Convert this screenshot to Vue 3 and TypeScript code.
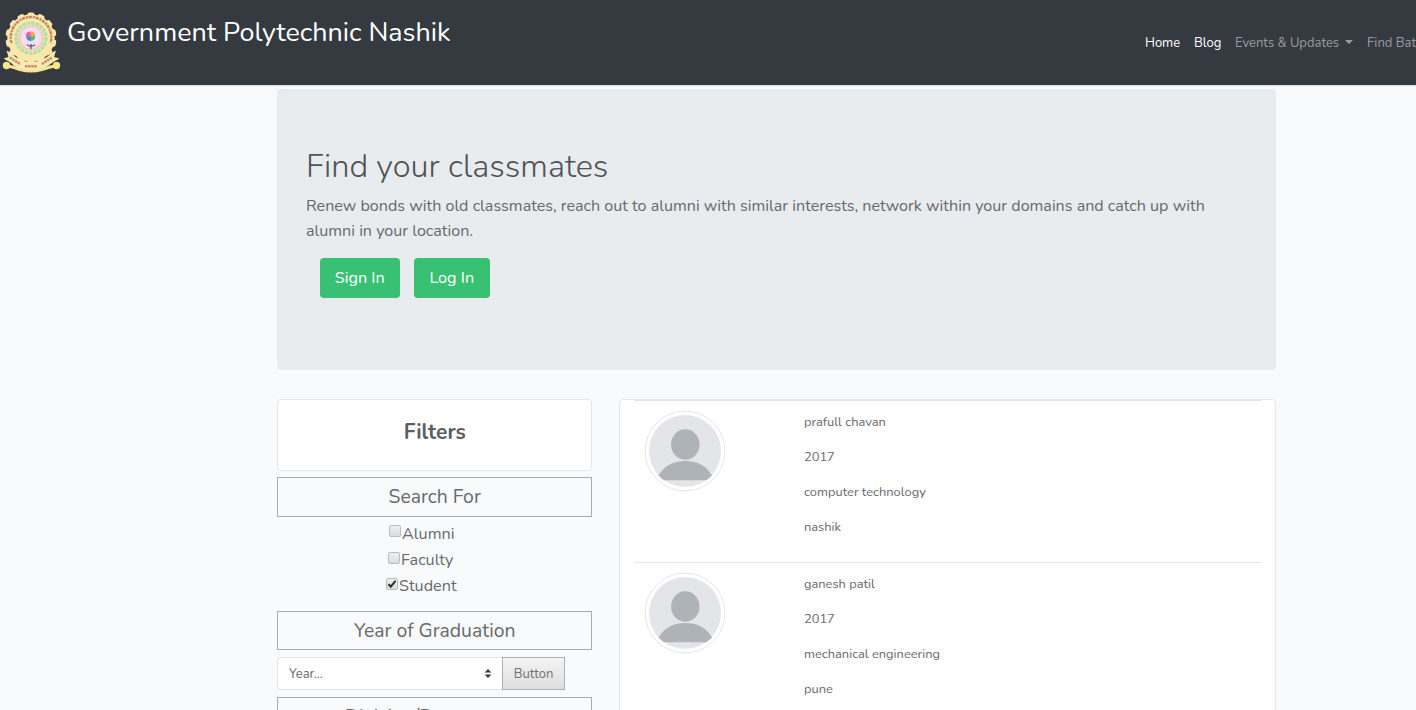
<script setup lang="ts">
import { ref } from 'vue'

interface Person {
  name: string
  year: string
  branch: string
  city: string
}

const people: Person[] = [
  { name: 'prafull chavan', year: '2017', branch: 'computer technology', city: 'nashik' },
  { name: 'ganesh patil', year: '2017', branch: 'mechanical engineering', city: 'pune' },
]

const roles = ref([
  { label: 'Alumni', key: 'alumni', checked: false },
  { label: 'Faculty', key: 'faculty', checked: false },
  { label: 'Student', key: 'student', checked: true },
])

const teeth = Array.from({ length: 14 }, (_, i) => (i * 360) / 14)
</script>

<template>
  <div class="page">
    <nav class="navbar">
      <svg class="logo" viewBox="0 0 60 62" aria-hidden="true">
        <g fill="#f9e9a6">
          <rect v-for="a in teeth" :key="a" x="25.500" y="1.500" width="7" height="6" rx="2" :transform="`rotate(${a} 29 27)`" />
          <circle cx="29" cy="27" r="23.700" />
        </g>
        <path d="M9.500 32A20.300 20.300 0 1 1 48.500 32" fill="none" stroke="#c58468" stroke-width="2.400" stroke-dasharray="3.400 .9 2 .7" />
        <circle cx="29" cy="27" r="17.600" fill="#f7edb8" />
        <circle cx="29" cy="27" r="15" fill="none" stroke="#b9dca8" stroke-width="3.600" stroke-dasharray="3.600 .8" />
        <circle cx="29" cy="27" r="11.800" fill="#f4dbe2" stroke="#e6b9ac" stroke-width="1.400" stroke-dasharray="2 .8" />
        <circle cx="29" cy="26" r="9.500" fill="#f1e0f4" />
        <path d="M28.500 20.500a4.300 4.300 0 0 0-4.300 6.300l4.800-1.300z" fill="#e75cb4" />
        <path d="M28.500 20.500a4.300 4.300 0 0 1 4.700 4.500l-4.200 1z" fill="#f6a83a" />
        <path d="M33.200 25q0 5-4.700 5l.5-4.500z" fill="#59b86a" />
        <path d="M24.300 26.500q.8 3.500 4.400 3.500l.4-4.500z" fill="#3a8ce0" />
        <path d="M25 33.500q1 1.700 4 1.700t4-1.700M29 33v5" fill="none" stroke="#65506a" stroke-width="1.300" />
        <path d="M1 36.500Q10 49.500 29 49.500T57 36.500" fill="none" stroke="#343a40" stroke-width="3" stroke-dasharray="17 32 17" />
        <path d="M3.500 54.500Q12 56 18 58.500 29 61.500 40 58.500 47 56 55 54.500" fill="none" stroke="#f4e58e" stroke-width="3" />
        <path d="M1.500 47.500l5-1.500-2-6.500 5 2.500q5 7.500 19.500 9.500 15-2 20-9.500l5-2.500-2 6.500 5.500 1.500-7 4Q42 59 29 59.500 15 59 8.500 51.500z" fill="#f9eab4" />
        <circle cx="4.500" cy="54.500" r="3.700" fill="#f4e58e" />
        <circle cx="54.500" cy="54.500" r="3.700" fill="#f4e58e" />
        <path d="M8 46.500l10 6.500M23 55.200h12M40 53l10-6.500" fill="none" stroke="#c88a63" stroke-width="2.400" stroke-dasharray="2.400 .7" />
      </svg>
      <a class="brand">Government Polytechnic Nashik</a>
      <div class="links">
        <a class="active home">Home</a>
        <a class="active blog">Blog</a>
        <a class="events">Events &amp; Updates<i class="caret"></i></a>
        <a class="find">Find Batch</a>
      </div>
    </nav>

    <main class="container">
      <header class="jumbotron">
        <h1>Find your classmates</h1>
        <p>Renew bonds with old classmates, reach out to alumni with similar interests, network within your domains and catch up with<br />alumni in your location.</p>
        <div class="actions">
          <button class="btn sign">Sign In</button>
          <button class="btn log">Log In</button>
        </div>
      </header>

      <div class="columns">
        <aside class="filters">
          <div class="card title"><b>Filters</b></div>
          <div class="section search"><span>Search For</span></div>
          <div class="checks">
            <label v-for="role in roles" :key="role.key" :class="role.key">
              <span class="box" @click="role.checked = !role.checked">
                <svg v-if="role.checked" viewBox="0 0 10 10"><path d="M1.500 5.200l2.300 2.400L8.500 1.800" fill="none" stroke="#303235" stroke-width="2.100" /></svg>
              </span>
              <span class="text">{{ role.label }}</span>
            </label>
          </div>
          <div class="section year"><span>Year of Graduation</span></div>
          <div class="group">
            <div class="select">
              <span>Year...</span>
              <svg viewBox="0 0 8 10"><path d="M4 0l3.700 4H.3zM4 10L.3 6h7.400z" fill="#343a40" /></svg>
            </div>
            <button class="plain">Button</button>
          </div>
          <div class="section division"><span>Division/Department</span></div>
        </aside>

        <section class="card results">
          <article v-for="person in people" :key="person.name" class="person">
            <svg class="avatar" viewBox="0 0 82 82" aria-hidden="true">
              <circle cx="41" cy="41" r="39.900" fill="#fff" stroke="#e3e7ea" stroke-width="1" />
              <circle cx="41" cy="41" r="36" fill="#e3e5e8" />
              <ellipse cx="41.300" cy="34.500" rx="14.200" ry="15.300" fill="#aeb3b7" />
              <path d="M14.500 65.500Q23 51 41.300 51T68 65.500L62.500 70.300H19.800z" fill="#aeb3b7" />
            </svg>
            <div class="details">
              <p class="name">{{ person.name }}</p>
              <p>{{ person.year }}</p>
              <p class="branch">{{ person.branch }}</p>
              <p>{{ person.city }}</p>
            </div>
          </article>
        </section>
      </div>
    </main>
  </div>
</template>

<style>
html,
body {
  margin: 0;
  overflow: hidden;
}
</style>

<style scoped>
* {
  box-sizing: border-box;
}
.page {
  height: 710px;
  overflow: hidden;
  background: #f8fafc;
  color: #67696c;
  font-family: Nunito, Lato, "Open Sans", sans-serif;
  font-size: 13px;
}
.navbar {
  display: flex;
  height: 85px;
  background: #343a40;
  box-shadow: 0 1px 1px #dce1e6;
  overflow: hidden;
  white-space: nowrap;
}
.logo {
  flex: none;
  width: 60px;
  height: 62px;
  margin: 11px 5px 0 2px;
}
.brand {
  margin-top: 12px;
  font-size: 26.900px;
  line-height: 40px;
  color: #fff;
}
.links {
  display: flex;
  flex: none;
  width: 271px;
  margin-left: auto;
  padding-top: 33px;
  line-height: 20px;
  color: #999c9f;
}
.links a {
  flex: none;
}
.links .active {
  color: #fff;
}
.home {
  width: 49px;
}
.blog {
  width: 41px;
}
.events {
  width: 132px;
}
.caret {
  display: inline-block;
  margin-left: 6px;
  vertical-align: 3px;
  border: 4px solid transparent;
  border-top-color: currentColor;
  border-bottom: 0;
}
.container {
  width: 999px;
  margin: 4px 0 0 277px;
}
.jumbotron {
  height: 281px;
  padding: 54px 29px 0;
  border-radius: 4px;
  background: #e8ecee;
  overflow: hidden;
}
h1 {
  margin: 0;
  font-size: 32.600px;
  font-weight: 300;
  line-height: 47px;
  color: #505356;
}
.jumbotron p {
  margin: 4px 0 0;
  font-size: 16.100px;
  line-height: 25px;
  white-space: nowrap;
}
.actions {
  display: flex;
  gap: 14px;
  margin: 14px 0 0 13.500px;
}
.btn {
  height: 40px;
  padding: 0;
  border: 0;
  border-radius: 4px;
  background: #38c172;
  color: #fff;
  font: inherit;
  font-size: 16.200px;
}
.sign {
  width: 80.500px;
}
.log {
  width: 75.500px;
}
.columns {
  display: flex;
  gap: 26.600px;
  margin-top: 29px;
}
.filters {
  flex: none;
  width: 315.400px;
}
.card {
  border: 1px solid #e4e7ea;
  border-radius: 4px;
  background: #fff;
}
.title {
  height: 72px;
  padding-top: 17px;
  font-size: 21px;
  line-height: 30px;
  text-align: center;
  color: #5b5d60;
}
.title b {
  font-weight: 700;
}
.section {
  height: 40px;
  border: 1px solid #a9abad;
  font-size: 19.400px;
  line-height: 38px;
  text-align: center;
}
.search {
  margin-top: 6px;
}
.checks {
  padding-top: 3px;
  font-size: 16.200px;
}
.checks label {
  display: flex;
  height: 26.500px;
  padding-left: 112px;
  line-height: 27px;
}
.checks .alumni {
  line-height: 28px;
}
.checks .faculty {
  padding-left: 111px;
}
.checks .student {
  padding-left: 109px;
}
.box {
  width: 12px;
  height: 12px;
  margin: 5px 1px 0 0;
  border: 1px solid #b9bbbd;
  border-radius: 2px;
  background: linear-gradient(#eeefef, #dcddde);
}
.box svg {
  display: block;
  width: 10px;
  height: 10px;
}
.section.year {
  height: 39px;
  margin-top: 11.500px;
  line-height: 37px;
}
.group {
  display: flex;
  margin-top: 7px;
}
.select {
  display: flex;
  align-items: center;
  justify-content: space-between;
  width: 226px;
  height: 33px;
  padding: 0 11px;
  border: 1px solid #e0e4e7;
  border-right: 0;
  border-radius: 4px 0 0 4px;
  background: #fff;
}
.select svg {
  width: 8px;
  height: 9px;
}
.plain {
  width: 63px;
  height: 33px;
  margin-left: -1px;
  padding: 0;
  border: 1px solid #adafb1;
  background: linear-gradient(#f4f4f4, #dedede);
  color: #707275;
  font: inherit;
}
.division {
  margin-top: 7px;
}
.results {
  flex: none;
  width: 657px;
  height: 330px;
  padding: 0 14px;
}
.person {
  display: flex;
  height: 162px;
  padding: 9px 0 0 10px;
  border-top: 1px solid #e3e5e7;
}
.avatar {
  width: 82px;
  height: 82px;
}
.details {
  margin-left: 78px;
  padding-top: .5px;
  font-size: 12.850px;
}
.details p {
  height: 35px;
  margin: 0;
  line-height: 23px;
}
</style>
